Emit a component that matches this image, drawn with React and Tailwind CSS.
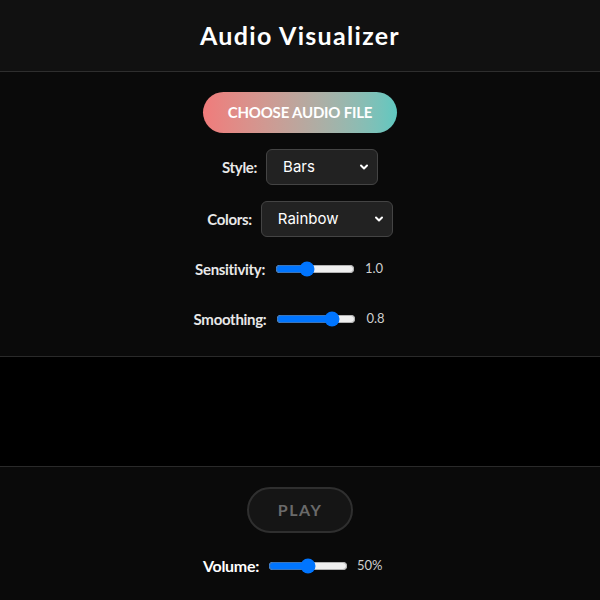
import { useState } from 'react';

function SliderRow({ label, min, max, step, value, onChange, display }) {
  return (
    <div className="flex items-center justify-center gap-[10px] h-5">
      <label className="text-[15px] font-bold text-[#e8e8e8] tracking-[-0.3px]">{label}</label>
      <input
        type="range"
        min={min}
        max={max}
        step={step}
        value={value}
        onChange={e => onChange(parseFloat(e.target.value))}
        className="w-20 accent-[#0075ff]"
      />
      <span className="text-[13px] text-[#cfcfcf] w-10">{display}</span>
    </div>
  );
}

export default function App() {
  const [style, setStyle] = useState('bars');
  const [colors, setColors] = useState('rainbow');
  const [sensitivity, setSensitivity] = useState(1.0);
  const [smoothing, setSmoothing] = useState(0.8);
  const [volume, setVolume] = useState(50);

  return (
    <div className="w-full min-h-screen bg-[#0a0a0a] text-white flex flex-col" style={{ fontFamily: 'Lato, "Noto Sans", sans-serif' }}>
      {/* Header */}
      <header className="h-[72px] bg-[#111111] border-b border-[#2e2e2e] flex items-center justify-center">
        <h1 className="text-[25px] font-bold tracking-[1.3px] text-white">Audio Visualizer</h1>
      </header>

      {/* Controls */}
      <section className="flex flex-col items-center pt-5 pb-[27px] border-b border-[#2a2a2a]">
        <button className="h-[41px] w-[194px] rounded-full bg-gradient-to-r from-[#f07b7b] to-[#5fc8c0] text-white font-bold text-[15px] tracking-[-0.2px]">
          CHOOSE AUDIO FILE
        </button>

        <div className="flex items-center gap-[9px] mt-4">
          <label className="text-[15px] font-bold text-[#e8e8e8] tracking-[-0.3px]">Style:</label>
          <div className="relative">
            <select
              value={style}
              onChange={e => setStyle(e.target.value)}
              className="appearance-none h-9 w-[112px] bg-[#222222] border border-[#444444] rounded-md pl-4 text-[15px] text-white outline-none"
              style={{ fontFamily: 'Inter, "Noto Sans", sans-serif' }}
            >
              <option value="bars">Bars</option>
              <option value="wave">Wave</option>
              <option value="circle">Circle</option>
            </select>
            <svg className="absolute right-[9px] top-1/2 -translate-y-1/2 pointer-events-none" width="10" height="10" viewBox="0 0 10 10">
              <path d="M2 3.5 L5 6.5 L8 3.5" stroke="white" strokeWidth="2" fill="none" strokeLinecap="round" strokeLinejoin="round" />
            </svg>
          </div>
        </div>

        <div className="flex items-center gap-[9px] mt-4">
          <label className="text-[15px] font-bold text-[#e8e8e8] tracking-[-0.3px]">Colors:</label>
          <div className="relative">
            <select
              value={colors}
              onChange={e => setColors(e.target.value)}
              className="appearance-none h-9 w-[132px] bg-[#222222] border border-[#444444] rounded-md pl-4 text-[15px] text-white outline-none"
              style={{ fontFamily: 'Inter, "Noto Sans", sans-serif' }}
            >
              <option value="rainbow">Rainbow</option>
              <option value="fire">Fire</option>
              <option value="ocean">Ocean</option>
            </select>
            <svg className="absolute right-[9px] top-1/2 -translate-y-1/2 pointer-events-none" width="10" height="10" viewBox="0 0 10 10">
              <path d="M2 3.5 L5 6.5 L8 3.5" stroke="white" strokeWidth="2" fill="none" strokeLinecap="round" strokeLinejoin="round" />
            </svg>
          </div>
        </div>

        <div className="mt-[22px]">
          <SliderRow label="Sensitivity:" min={0.1} max={2.5} step={0.1} value={sensitivity} onChange={setSensitivity} display={sensitivity.toFixed(1)} />
        </div>
        <div className="mt-[30px]">
          <SliderRow label="Smoothing:" min={0.1} max={1.05} step={0.05} value={smoothing} onChange={setSmoothing} display={smoothing.toFixed(1)} />
        </div>
      </section>

      {/* Canvas */}
      <div className="h-[110px] bg-black border-b border-[#2a2a2a]" />

      {/* Playback */}
      <section className="flex-1 flex flex-col items-center pt-5 pb-6">
        <button disabled className="h-[46px] w-[106px] rounded-full border-2 border-[#2f2f2f] bg-[#151515] text-[#6a6a6a] font-bold text-[16px] tracking-[1.5px]">
          PLAY
        </button>
        <div className="flex items-center gap-[9px] mt-[23px] h-5">
          <label className="text-[16px] font-bold text-white tracking-[-0.3px]">Volume:</label>
          <input
            type="range"
            min={0}
            max={100}
            value={volume}
            onChange={e => setVolume(parseInt(e.target.value))}
            className="w-20 accent-[#0075ff]"
          />
          <span className="text-[13px] text-[#cfcfcf] w-10">{volume}%</span>
        </div>
      </section>
    </div>
  );
}
